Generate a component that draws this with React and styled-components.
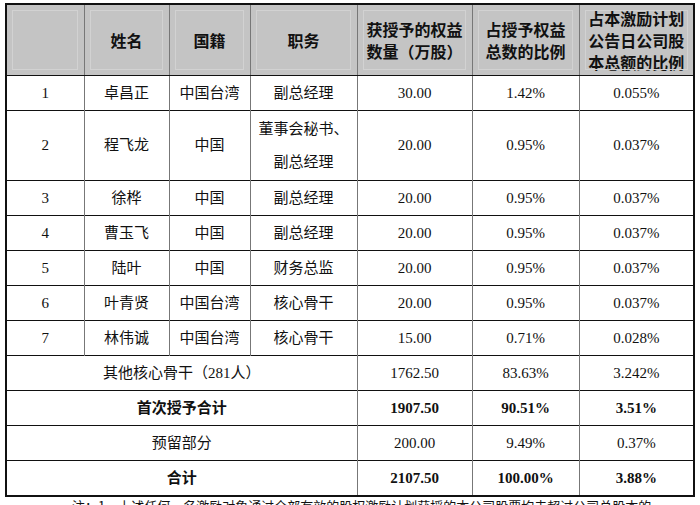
import React from 'react';
import styled, {createGlobalStyle} from 'styled-components';

const GlobalStyle = createGlobalStyle`
	body {
		margin: 0;
		background: #fff;
	}
`;

const Page = styled.div`
	width: 700px;
	height: 505px;
	overflow: hidden;
	box-sizing: border-box;
	padding: 3px 0 0 5px;
`;

const Table = styled.table`
	border-collapse: collapse;
	table-layout: fixed;
	width: 688px;
	border: 2px solid #111;
	font-family: "Liberation Serif", "Noto Sans CJK SC", serif;
	font-size: 15px;
	color: #111;
`;

const Th = styled.th`
	background: #c4c4c4;
	height: 70px;
	padding: 0;
	font-family: "Noto Sans CJK SC", sans-serif;
	font-weight: 700;
	font-size: 16px;
	line-height: 22px;
	border-bottom: 1px solid #111;
	border-left: 1px solid #777;
	outline: 1px solid #d2d2d2;
	outline-offset: -7px;
`;

const Td = styled.td`
	height: ${p => p.$tall ? 69 : 34}px;
	padding: 0;
	text-align: center;
	line-height: ${p => p.$tall ? 33 : 20}px;
	font-weight: ${p => p.$bold ? 700 : 400};
	border-top: 1px solid #111;
	border-left: 1px solid #777;
`;

const Note = styled.p`
	margin: 0;
	padding-left: 67px;
	font-family: "Noto Sans CJK SC", sans-serif;
	font-size: 13px;
	line-height: 18px;
	color: #111;
	white-space: nowrap;
`;

const widths = [78, 85, 81, 107, 115, 107, 115];

const people = [
	{no: 1, name: '卓昌正', nat: '中国台湾', job: '副总经理', qty: '30.00', pct: '1.42%', total: '0.055%'},
	{no: 2, name: '程飞龙', nat: '中国', job: ['董事会秘书、', '副总经理'], qty: '20.00', pct: '0.95%', total: '0.037%'},
	{no: 3, name: '徐桦', nat: '中国', job: '副总经理', qty: '20.00', pct: '0.95%', total: '0.037%'},
	{no: 4, name: '曹玉飞', nat: '中国', job: '副总经理', qty: '20.00', pct: '0.95%', total: '0.037%'},
	{no: 5, name: '陆叶', nat: '中国', job: '财务总监', qty: '20.00', pct: '0.95%', total: '0.037%'},
	{no: 6, name: '叶青贤', nat: '中国台湾', job: '核心骨干', qty: '20.00', pct: '0.95%', total: '0.037%'},
	{no: 7, name: '林伟诚', nat: '中国台湾', job: '核心骨干', qty: '15.00', pct: '0.71%', total: '0.028%'},
];

const totals = [
	{label: '其他核心骨干（281人）', qty: '1762.50', pct: '83.63%', total: '3.242%'},
	{label: '首次授予合计', qty: '1907.50', pct: '90.51%', total: '3.51%', bold: true},
	{label: '预留部分', qty: '200.00', pct: '9.49%', total: '0.37%'},
	{label: '合计', qty: '2107.50', pct: '100.00%', total: '3.88%', bold: true},
];

const renderPerson = p => {
	const tall = Array.isArray(p.job);
	return (
		<tr key={p.no}>
			<Td $tall={tall}>{p.no}</Td>
			<Td $tall={tall}>{p.name}</Td>
			<Td $tall={tall}>{p.nat}</Td>
			<Td $tall={tall}>{tall ? <>{p.job[0]}<br />{p.job[1]}</> : p.job}</Td>
			<Td $tall={tall}>{p.qty}</Td>
			<Td $tall={tall}>{p.pct}</Td>
			<Td $tall={tall}>{p.total}</Td>
		</tr>
	);
};

const renderTotal = t => (
	<tr key={t.label}>
		<Td colSpan={4} $bold={t.bold}>{t.label}</Td>
		<Td $bold={t.bold}>{t.qty}</Td>
		<Td $bold={t.bold}>{t.pct}</Td>
		<Td $bold={t.bold}>{t.total}</Td>
	</tr>
);

export default function App() {
	return (
		<Page>
			<GlobalStyle />
			<Table>
				<colgroup>
					{widths.map((w, i) => <col key={i} style={{width: w}} />)}
				</colgroup>
				<thead>
					<tr>
						<Th></Th>
						<Th>姓名</Th>
						<Th>国籍</Th>
						<Th>职务</Th>
						<Th>获授予的权益<br />数量（万股）</Th>
						<Th>占授予权益<br />总数的比例</Th>
						<Th>占本激励计划<br />公告日公司股<br />本总额的比例</Th>
					</tr>
				</thead>
				<tbody>
					{people.map(renderPerson)}
					{totals.map(renderTotal)}
				</tbody>
			</Table>
			<Note>注：1、上述任何一名激励对象通过全部有效的股权激励计划获授的本公司股票均未超过公司总股本的</Note>
		</Page>
	);
}
